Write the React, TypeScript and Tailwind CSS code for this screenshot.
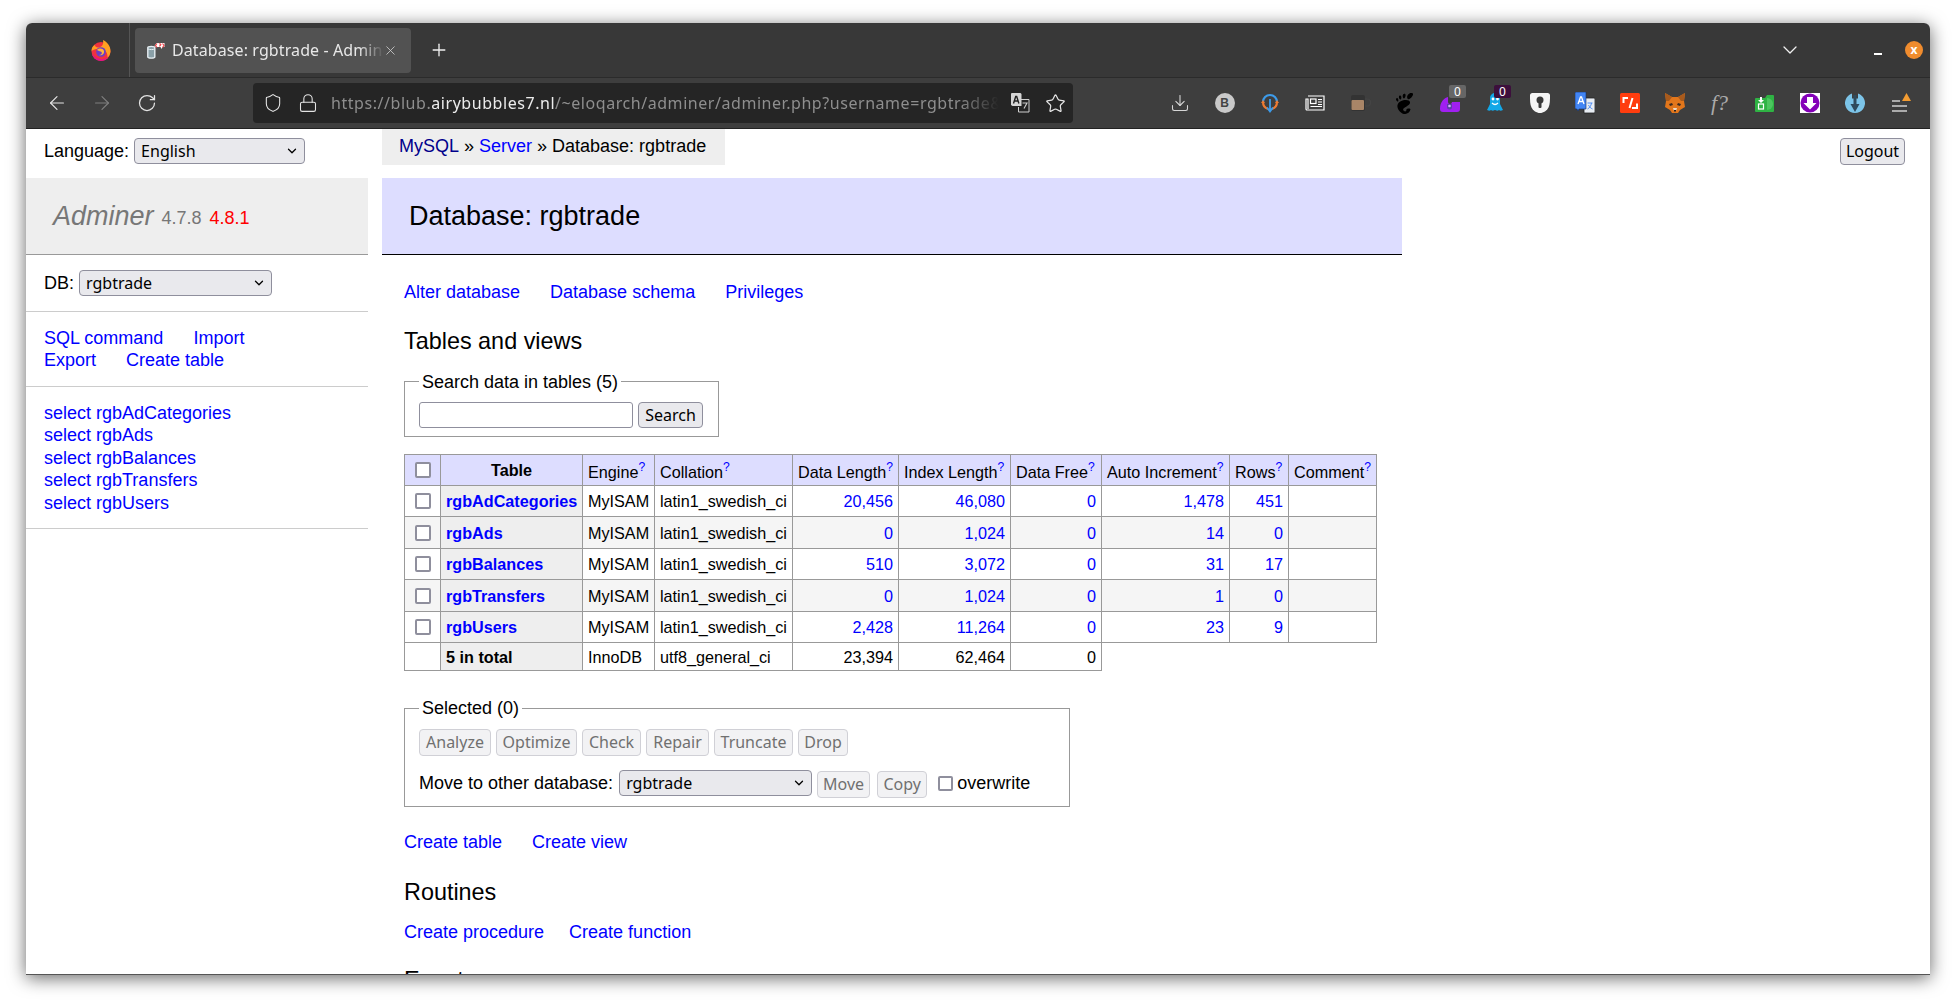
import { ArrowLeft, ArrowRight, ChevronDown, Download, Lock, Plus, RotateCw, Shield, Star, X } from "lucide-react"
import { SiGnome } from "react-icons/si"

const ui = "[font-family:'Noto_Sans',sans-serif]"

const Firefox = () => (
  <svg width="20" height="21" viewBox="0 0 20 21">
    <circle cx="10" cy="11.500" r="9.500" fill="#f0313f" />
    <path d="M.5 11C.5 8 2 5.500 4 5c0 1.500 1 2.500 3 2.500 3 0 6-2 5-7.500 4 2 7.500 5.500 7.500 11 0 2-1 5-3 6.500 .5-5-3-9-7-9-4 0-7 1-9 2.500z" fill="#ffa022" />
    <circle cx="10" cy="12" r="4.800" fill="#6a3fc6" />
    <path d="M6 10c2-2 6-2 7 1 .5 3-2 5-5 4 2.500 0 3.500-2 2.500-3S8 11.500 6 10z" fill="#ffb43c" />
    <path d="M1 14c1 4 5 7 9 7 3 0 6-1.500 7.500-4-3 2-7 3-10 1.500C5 17.500 3 16 1 14z" fill="#e31587" />
  </svg>
)

const TabIcon = () => (
  <svg width="18" height="18" viewBox="0 0 18 18">
    <path d="M.8 6.500c0-1.500 7-1.500 7 0v9.500c0 1.500-7 1.500-7 0z" fill="#8aa0a8" stroke="#e6eef2" strokeWidth="1.400" />
    <path d="M1 8c2 .8 5 .8 6.600 0" fill="none" stroke="#e6eef2" strokeWidth="1" />
    <path d="M7.500 5l2-3 8 0V6l-2 0-1 2-1-2H9z" fill="#fff" />
    <path d="M10 2.500l-1.500 2 1.500 2M15.500 2.500l1.500 2-1.500 2M12 3.200c1-1 2.500 0 1.500 1l-.8.800v.6" fill="none" stroke="#f0444a" strokeWidth="1.200" />
  </svg>
)

const Ring = () => (
  <svg width="20" height="22" viewBox="0 0 20 22">
    <path d="M3 10a7 7 0 0 1 14 0" fill="none" stroke="#3d9be9" strokeWidth="2.200" />
    <path d="M3 10c0 3 2 6 5 7M17 10c0 3-2 6-5 7" fill="none" stroke="#ee7a30" strokeWidth="2.200" />
    <path d="M10 7v12M7 15.500l3 4 3-4" fill="none" stroke="#3d9be9" strokeWidth="1.800" />
    <path d="M1 11l2-3 2 3zM15 11l2-3 2 3z" fill="#ee7a30" />
  </svg>
)

const News = () => (
  <svg width="20" height="20" viewBox="0 0 20 20" fill="none" stroke="#fff" strokeWidth="1.200">
    <path d="M3 3h16v14H2a1 1 0 0 1-1-1V6h2v10" />
    <rect x="5.500" y="6" width="5.500" height="4.500" />
    <path d="M13 6.500h4M13 9h4M13 11.500h4M5.500 13.500h11.500" />
  </svg>
)

const Coffee = () => (
  <svg width="22" height="20" viewBox="0 0 22 20">
    <rect x="2" y="2" width="14" height="16" rx="2" fill="#333" />
    <rect x="2.500" y="7" width="12.500" height="10" rx="1" fill="#a98567" />
    <path d="M16 6h2a3 3 0 0 1 0 7h-2" fill="none" stroke="#444" strokeWidth="1.200" />
  </svg>
)

const Purple = () => (
  <svg width="20" height="20" viewBox="0 0 20 20">
    <path d="M0 16C0 9 4 5 8 4v5a2 2 0 0 0 4 0h8v7a3 3 0 0 1-3 3H3a3 3 0 0 1-3-3z" fill="#a020f0" />
    <path d="M7 11h5v3a2.500 2.500 0 0 1-5 0z" fill="#5c3fa8" />
    <circle cx="9.500" cy="13" r="1.300" fill="#d8b4fe" />
  </svg>
)

const Ghost = () => (
  <svg width="20" height="22" viewBox="0 0 20 22">
    <path d="M5 6a5 5 0 0 1 10 0v6l3 6c-2 1-3 1-4 0-1 1-2 1-4 0-2 1-3 1-4 0-1 1-2 1-4 0l3-6z" fill="#12a8e8" />
    <circle cx="8" cy="7" r="1.400" fill="#fff" />
    <circle cx="12.500" cy="7" r="1.400" fill="#fff" />
    <path d="M7 11c2 2 4 2 6 0" fill="none" stroke="#fff" strokeWidth="1.200" />
  </svg>
)

const Bitwarden = () => (
  <svg width="20" height="20" viewBox="0 0 20 20">
    <path d="M2.500 0h15A2.500 2.500 0 0 1 20 2.500c0 5 0 9-1.500 12-1.500 3-5 5.500-8.500 5.500s-7-2.500-8.500-5.500C0 11.500 0 7.500 0 2.500A2.500 2.500 0 0 1 2.500 0z" fill="#f5f5f5" />
    <circle cx="10" cy="7" r="3.500" fill="#3a3a3a" />
    <rect x="8.500" y="8" width="3" height="7" rx="1" fill="#3a3a3a" />
  </svg>
)

const Translate = () => (
  <svg width="20" height="22" viewBox="0 0 20 22">
    <path d="M9 6h10a1 1 0 0 1 1 1v13a1 1 0 0 1-1 1H9z" fill="#e8edf3" stroke="#222" strokeWidth="0.800" />
    <path d="M1 0h10v17H4l-1 2-1-2H1a1 1 0 0 1-1-1V1a1 1 0 0 1 1-1z" fill="#4285f4" stroke="#16306a" strokeWidth="0.600" />
    <path d="M3 12l2.500-7h1l2.500 7M4.200 9.500h3.600" fill="none" stroke="#fff" strokeWidth="1.300" />
    <path d="M12.500 11h5M16.500 11c-.5 3-2 5-4 6M13.500 13c1 2 2 3 4 4" fill="none" stroke="#4285f4" strokeWidth="0.900" />
  </svg>
)

// the greyed page translate button inside the url bar
const PageTranslate = () => (
  <svg width="20" height="20" viewBox="0 0 20 20">
    <path d="M10 6.500h9v12.500h-10.500v-5" fill="#252525" stroke="#d0d0d0" strokeWidth="1" />
    <path d="M1.500 0h9l1 1v12h-9l-1.500-1V1z" fill="#d6d6d6" />
    <path d="M3.500 10.500l2.200-7h1l2.200 7M4.500 8h3.400" fill="none" stroke="#222" strokeWidth="1.400" />
    <path d="M12.500 10h4.500l-3 5.500" fill="none" stroke="#d0d0d0" strokeWidth="1.100" />
  </svg>
)

const RedCode = () => (
  <svg width="20" height="20" viewBox="0 0 20 20">
    <rect width="20" height="20" rx="1.500" fill="#ff3d0f" />
    <path d="M8 5H3.500v5M9.500 15l3-10M12 15h5v-4.500" fill="none" stroke="#fff" strokeWidth="2" />
  </svg>
)

const Fox = () => (
  <svg width="20" height="20" viewBox="0 0 20 20">
    <path d="M0 0l7 4h6l7-4-1 8 1 6-5 3-2 3H7l-2-3-5-3 1-6z" fill="#e2761b" />
    <path d="M0 0l7 4-3 4H1zM20 0l-7 4 3 4h3z" fill="#a85a1c" />
    <path d="M4 11l3-1 1 2-3 1zM16 11l-3-1-1 2 3 1z" fill="#3b2a20" />
    <path d="M8 15h4l-1 3H9z" fill="#e8d8c8" />
    <path d="M9 17h2v1.500H9z" fill="#222" />
  </svg>
)

const Folder = () => (
  <svg width="20" height="20" viewBox="0 0 20 20">
    <path d="M1 5h9l2-3h6a1 1 0 0 1 1 1v15a1 1 0 0 1-1 1H1a1 1 0 0 1-1-1V6a1 1 0 0 1 1-1z" fill="#2fb344" />
    <path d="M12 5a6 6 0 0 1 0 12" fill="#4cc65f" />
    <path d="M5 4h2v3h2l-3 3-3-3h2z" fill="#fff" />
    <rect x="3.500" y="11" width="5" height="5" fill="none" stroke="#fff" strokeWidth="1.200" />
  </svg>
)

const PurpleDown = () => (
  <svg width="20" height="20" viewBox="0 0 20 20">
    <rect width="20" height="20" fill="#fff" />
    <circle cx="10" cy="10" r="9.500" fill="#8400b8" />
    <path d="M7 4h6v6h3.500L10 16.500 3.500 10H7z" fill="#fff" />
  </svg>
)

const BlueDown = () => (
  <svg width="20" height="22" viewBox="0 0 20 22">
    <path d="M7 1.500a10 10 0 1 0 6 0v5h-6z" fill="#7cc4e8" />
    <path d="M8.500 3h3v9h3L10 20l-4.500-8h3z" fill="#2f4a5c" />
  </svg>
)

const Menu = () => (
  <svg width="24" height="22" viewBox="0 0 24 22" className="ml-[6px]">
    <path d="M1 9h8M1 14h15M1 19h15" stroke="#cfcfcf" strokeWidth="1.600" />
    <path d="M11 9l4.500-8L20 9z" fill="#f39c32" />
  </svg>
)

const Badge = ({ bg }: { bg: string }) => (
  <span className={`absolute left-[22px] top-[7px] flex h-[13px] w-[17px] items-center justify-center rounded-[2px] text-[12px] leading-none text-white ${bg}`}>0</span>
)

const tools = [
  <Download key="dl" size={20} strokeWidth={1.3} className="text-[#d6d6d6]" />,
  <span key="b" className="flex h-[20px] w-[20px] items-center justify-center rounded-full bg-[#c9c9c9] text-[12px] font-bold text-[#444] [font-family:'Liberation_Sans',sans-serif]">B</span>,
  <Ring key="ring" />,
  <News key="news" />,
  <Coffee key="coffee" />,
  <SiGnome key="gnome" size={21} className="text-black" />,
  <Purple key="purple" />,
  <Ghost key="ghost" />,
  <Bitwarden key="bw" />,
  <Translate key="translate" />,
  <RedCode key="red" />,
  <Fox key="fox" />,
  <span key="f" className="text-[22px] italic leading-none text-[#aaa] [font-family:'Liberation_Serif',serif]">f?</span>,
  <Folder key="folder" />,
  <PurpleDown key="pd" />,
  <BlueDown key="bd" />,
  <Menu key="menu" />,
]

const Browser = () => (
  <div className={ui}>
    <div className="flex h-[55px] items-center border-b border-[#2b2b2b] bg-[#383838]">
      <div className="flex h-full w-[104px] shrink-0 items-center border-r border-[#555] pl-[65px]">
        <Firefox />
      </div>
      <div className="ml-[5px] flex h-[45px] w-[276px] shrink-0 items-center rounded-[4px] bg-[#525252] pl-[12px]">
        <TabIcon />
        <span className="ml-[7px] w-[212px] overflow-hidden whitespace-nowrap text-[16px] tracking-[0.1px] text-[#e8e8e8] [mask-image:linear-gradient(to_right,black_88%,transparent)]">Database: rgbtrade - Adminer</span>
        <X size={15} strokeWidth={1.3} className="ml-[-1px] text-[#d0d0d0]" />
      </div>
      <Plus size={20} strokeWidth={1.6} className="ml-[18px] shrink-0 text-[#f0f0f0]" />
      <ChevronDown size={24} strokeWidth={1.3} className="ml-[1329px] shrink-0 text-[#f0f0f0]" />
      <span className="ml-[72px] mt-[8px] h-[2px] w-[8px] shrink-0 bg-white" />
      <span className="ml-[23px] flex h-[18px] w-[18px] shrink-0 items-center justify-center rounded-full bg-[#f08c2e] text-[12px] font-bold leading-none text-white">x</span>
    </div>
    <div className="flex h-[51px] items-center border-b border-[#222] bg-[#3e3e3e] pl-[8px]">
      <span className="flex w-[45px] justify-center"><ArrowLeft size={22} strokeWidth={1.3} className="text-[#e4e4e4]" /></span>
      <span className="flex w-[45px] justify-center"><ArrowRight size={22} strokeWidth={1.3} className="text-[#7f7f7f]" /></span>
      <span className="flex w-[45px] justify-center"><RotateCw size={20} strokeWidth={1.5} className="text-[#e4e4e4]" /></span>
      <div className="ml-[84px] flex h-[40px] w-[820px] items-center rounded-[4px] bg-[#252525] pl-[10px]">
        <Shield size={20} strokeWidth={1.3} className="text-[#e4e4e4]" />
        <Lock size={20} strokeWidth={1.3} className="ml-[15px] text-[#e4e4e4]" />
        <div className="ml-[13px] w-[668px] overflow-hidden whitespace-nowrap text-[16px] tracking-[0.55px] text-[#8e8e8e] [mask-image:linear-gradient(to_right,black_94%,transparent)]">
          https://blub.<span className="text-[#ececec]">airybubbles7.nl</span>/~eloqarch/adminer/adminer.php?username=rgbtrade&amp;db=rgbtrade
        </div>
        <span className="ml-[11px]"><PageTranslate /></span>
        <Star size={21} strokeWidth={1.4} className="ml-[15px] text-[#e4e4e4]" />
      </div>
      <div className="ml-[84px] flex">
        {tools.map((icon, i) => (
          <span key={i} className="relative flex h-[50px] w-[45px] items-center justify-center">
            {icon}
            {i === 6 && <Badge bg="bg-[#666]" />}
            {i === 7 && <Badge bg="bg-[#3c0f3c]" />}
          </span>
        ))}
      </div>
    </div>
  </div>
)

const Select = ({ value, className }: { value: string; className: string }) => (
  <span className={`relative inline-flex h-[26px] ${className}`}>
    <select defaultValue={value} className={`h-full w-full appearance-none rounded-[4px] border border-[#8f8f9d] bg-[#e9e9ed] pl-[6px] text-[16px] text-black ${ui}`}>
      <option>{value}</option>
    </select>
    <ChevronDown size={14} strokeWidth={2.2} className="pointer-events-none absolute right-[6px] top-[6px] text-black" />
  </span>
)

const Button = ({ label, disabled, className = "" }: { label: string; disabled?: boolean; className?: string }) => (
  <button
    disabled={disabled}
    className={`h-[27px] rounded-[4px] border text-[16px] leading-none ${ui} ${disabled ? "border-[#d0d0d6] bg-[#f2f2f4] text-[#707070]" : "border-[#8f8f9d] bg-[#e9e9ed] text-black"} ${className}`}
  >
    {label}
  </button>
)

const Check = () => <input type="checkbox" className="block h-[16px] w-[16px] appearance-none rounded-[2px] border-2 border-[#8f8f9d] bg-white" />

const tableNames = ["rgbAdCategories", "rgbAds", "rgbBalances", "rgbTransfers", "rgbUsers"]

const Sidebar = () => (
  <aside className="w-[342px] shrink-0 text-[18px] leading-[22.5px]">
    <div className="flex h-[49px] items-start pl-[18px] pt-[9px]">
      <span className="mr-[5px] leading-[26px]">Language:</span>
      <Select value="English" className="w-[171px]" />
    </div>
    <div className="flex h-[77px] items-center border-b border-[#999] bg-[#eee] pl-[27px] text-[#777]">
      <em className="text-[27px]">Adminer</em>
      <span className="ml-[8px] mt-[4px]">4.7.8</span>
      <span className="ml-[8px] mt-[4px] text-[#f00]">4.8.1</span>
    </div>
    <div className="flex h-[57px] items-start border-b border-[#ccc] pl-[18px] pt-[15px]">
      <span className="mr-[5px] leading-[26px]">DB:</span>
      <Select value="rgbtrade" className="w-[193px]" />
    </div>
    <div className="h-[75px] border-b border-[#ccc] pl-[18px] pt-[15px] leading-[22px] text-[#00f]">
      <div className="flex gap-[30px]"><a href="#">SQL command</a><a href="#">Import</a></div>
      <div className="flex gap-[30px]"><a href="#">Export</a><a href="#">Create table</a></div>
    </div>
    <ul className="h-[142px] border-b border-[#ccc] pl-[18px] pt-[14.6px] text-[#00f]">
      {tableNames.map((name) => (
        <li key={name}><a href="#">select {name}</a></li>
      ))}
    </ul>
  </aside>
)

const rows = [
  { name: "rgbAdCategories", data: "20,456", index: "46,080", auto: "1,478", count: "451", h: "h-[31px]" },
  { name: "rgbAds", data: "0", index: "1,024", auto: "14", count: "0", h: "h-[32px]" },
  { name: "rgbBalances", data: "510", index: "3,072", auto: "31", count: "17", h: "h-[31px]" },
  { name: "rgbTransfers", data: "0", index: "1,024", auto: "1", count: "0", h: "h-[32px]" },
  { name: "rgbUsers", data: "2,428", index: "11,264", auto: "23", count: "9", h: "h-[31px]" },
]

const headers = ["Engine", "Collation", "Data Length", "Index Length", "Data Free", "Auto Increment", "Rows", "Comment"]
const widths = ["w-[36px]", "w-[142px]", "w-[72px]", "w-[138px]", "w-[106px]", "w-[112px]", "w-[91px]", "w-[128px]", "w-[59px]", "w-[88px]"]
const cell = "border border-[#999] px-[5px]"

const TablesTable = () => (
  <table className="mt-[17px] w-[973px] table-fixed border-collapse text-[16.2px] leading-[20px]">
    <colgroup>
      {widths.map((w) => <col key={w} className={w} />)}
    </colgroup>
    <thead>
      <tr className="h-[31px] bg-[#ddf]">
        <td className={cell}><span className="flex justify-center"><Check /></span></td>
        <th className={`${cell} text-center font-bold`}>Table</th>
        {headers.map((h) => (
          <td key={h} className={`${cell} whitespace-nowrap pt-[3px]`}>{h}<sup className="text-[#00f]">?</sup></td>
        ))}
      </tr>
    </thead>
    <tbody>
      {rows.map((r, i) => (
        <tr key={r.name} className={`${r.h} ${i % 2 ? "bg-[#f5f5f5]" : "bg-white"}`}>
          <td className={cell}><span className="flex justify-center"><Check /></span></td>
          <th className={`${cell} bg-[#eee] text-left font-bold text-[#00f]`}><a href="#">{r.name}</a></th>
          <td className={cell}>MyISAM</td>
          <td className={cell}>latin1_swedish_ci</td>
          <td className={`${cell} text-right text-[#00f]`}>{r.data}</td>
          <td className={`${cell} text-right text-[#00f]`}>{r.index}</td>
          <td className={`${cell} text-right text-[#00f]`}>0</td>
          <td className={`${cell} text-right text-[#00f]`}>{r.auto}</td>
          <td className={`${cell} text-right text-[#00f]`}>{r.count}</td>
          <td className={cell}></td>
        </tr>
      ))}
      <tr className="h-[28px]">
        <td className={cell}></td>
        <th className={`${cell} bg-[#eee] text-left font-bold`}>5 in total</th>
        <td className={cell}>InnoDB</td>
        <td className={cell}>utf8_general_ci</td>
        <td className={`${cell} text-right`}>23,394</td>
        <td className={`${cell} text-right`}>62,464</td>
        <td className={`${cell} text-right`}>0</td>
      </tr>
    </tbody>
  </table>
)

const Content = () => (
  <main className="min-w-0 flex-1 pl-[14px] text-[18px] leading-[22.5px] text-black">
    <div className="flex h-[49px] items-start justify-between pr-[25px]">
      <div className="flex h-[36px] w-[343px] items-center bg-[#eee] pb-[2px] pl-[17px]">
        <a href="#" className="text-[#00008b]">MySQL</a>
        <span className="whitespace-pre"> » </span>
        <a href="#" className="text-[#00f]">Server</a>
        <span className="whitespace-pre"> » Database: rgbtrade</span>
      </div>
      <Button label="Logout" className="mt-[9px] w-[65px] pb-[1px]" />
    </div>
    <h2 className="flex h-[77px] w-[1020px] items-center border-b border-black bg-[#ddf] pl-[27px] text-[27px]">Database: rgbtrade</h2>
    <div className="pl-[22px]">
      <div className="mt-[26px] flex gap-[30px] text-[#00f]">
        <a href="#">Alter database</a>
        <a href="#">Database schema</a>
        <a href="#">Privileges</a>
      </div>
      <h3 className="mt-[22px] text-[23.4px] leading-[30px]">Tables and views</h3>
      <fieldset className="mt-[15px] w-[315px] border border-[#999] pb-[8px] pl-[14px]">
        <legend className="px-[3px]">Search data in tables (5)</legend>
        <div className="mt-[9px] flex gap-[5px]">
          <input className="h-[26px] w-[214px] rounded-[3px] border border-[#8f8f9d] bg-white" />
          <Button label="Search" className="!h-[26px] w-[65px]" />
        </div>
      </fieldset>
      <TablesTable />
      <fieldset className="mt-[26px] w-[666px] border border-[#999] pl-[14px]">
        <legend className="px-[3px]">Selected (0)</legend>
        <div className="mt-[9px] flex gap-[5px]">
          <Button disabled label="Analyze" className="w-[72px]" />
          <Button disabled label="Optimize" className="w-[81px]" />
          <Button disabled label="Check" className="w-[59px]" />
          <Button disabled label="Repair" className="w-[63px]" />
          <Button disabled label="Truncate" className="w-[79px]" />
          <Button disabled label="Drop" className="w-[50px]" />
        </div>
        <div className="mb-[8px] mt-[13px] flex items-center">
          <span className="mr-[6px]">Move to other database:</span>
          <Select value="rgbtrade" className="w-[193px]" />
          <Button disabled label="Move" className="ml-[5px] mt-[2px] w-[53px]" />
          <Button disabled label="Copy" className="ml-[7px] mt-[2px] w-[50px]" />
          <input type="checkbox" className="ml-[11px] h-[15px] w-[15px] appearance-none rounded-[2px] border-2 border-[#8f8f9d] bg-white" />
          <span className="ml-[4px]">overwrite</span>
        </div>
      </fieldset>
      <div className="mt-[24px] flex gap-[30px] text-[#00f]">
        <a href="#">Create table</a>
        <a href="#">Create view</a>
      </div>
      <h3 className="mt-[24px] text-[23.4px] leading-[30px]">Routines</h3>
      <div className="mt-[14px] flex gap-[25px] text-[#00f]">
        <a href="#">Create procedure</a>
        <a href="#">Create function</a>
      </div>
      <h3 className="mt-[21px] text-[23.4px] leading-[30px]">Events</h3>
    </div>
  </main>
)

export default function App() {
  return (
    <div className="h-[1004px] w-[1956px] overflow-hidden bg-white pl-[26px] pt-[23px] [font-family:'Liberation_Sans',sans-serif]">
      <div className="flex h-[952px] w-[1904px] flex-col overflow-hidden rounded-t-[6px] bg-white shadow-[0_3px_18px_rgba(0,0,0,0.6)]">
        <Browser />
        <div className="flex min-h-0 flex-1 overflow-hidden border-b border-[#555]">
          <Sidebar />
          <Content />
        </div>
      </div>
    </div>
  )
}
